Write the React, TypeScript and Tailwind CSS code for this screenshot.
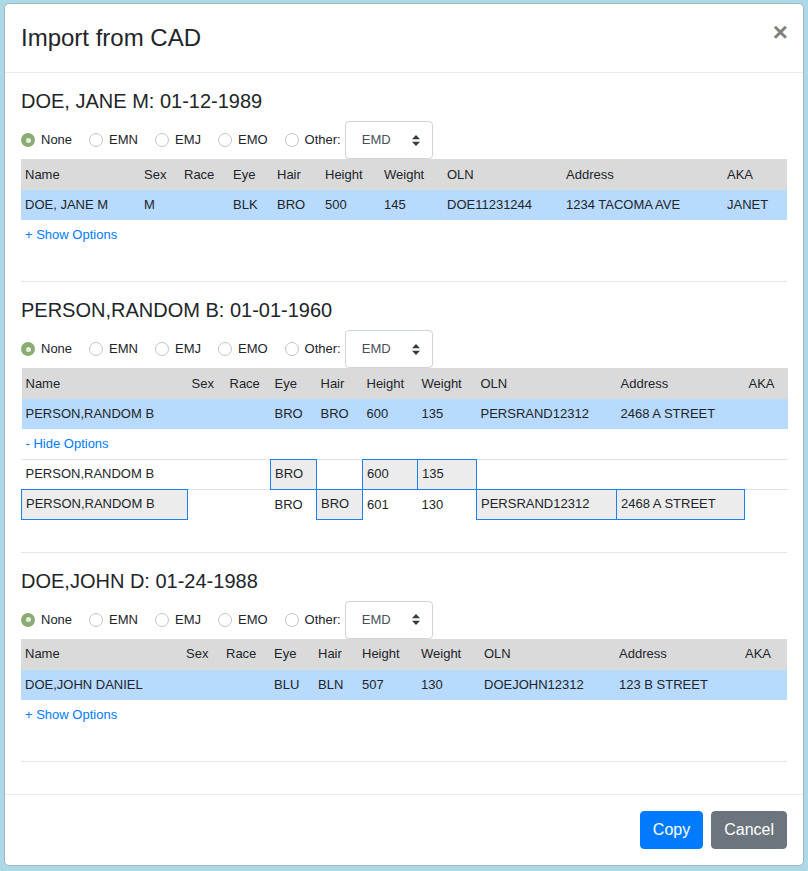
import React from 'react';

type Person = {
  name: string;
  sex: string;
  race: string;
  eye: string;
  hair: string;
  height: string;
  weight: string;
  oln: string;
  address: string;
  aka: string;
};

type OptionRow = { values: Person; marked: (keyof Person)[] };

type Section = {
  title: string;
  widths: string[];
  record: Person;
  expanded: boolean;
  options: OptionRow[];
};

const columns: { key: keyof Person; label: string }[] = [
  { key: 'name', label: 'Name' },
  { key: 'sex', label: 'Sex' },
  { key: 'race', label: 'Race' },
  { key: 'eye', label: 'Eye' },
  { key: 'hair', label: 'Hair' },
  { key: 'height', label: 'Height' },
  { key: 'weight', label: 'Weight' },
  { key: 'oln', label: 'OLN' },
  { key: 'address', label: 'Address' },
  { key: 'aka', label: 'AKA' },
];

const blank: Person = {
  name: '',
  sex: '',
  race: '',
  eye: '',
  hair: '',
  height: '',
  weight: '',
  oln: '',
  address: '',
  aka: '',
};

const sections: Section[] = [
  {
    title: 'DOE, JANE M: 01-12-1989',
    widths: ['w-[119px]', 'w-[40px]', 'w-[49px]', 'w-[44px]', 'w-[48px]', 'w-[59px]', 'w-[63px]', 'w-[119px]', 'w-[161px]', 'w-[64px]'],
    record: {
      name: 'DOE, JANE M',
      sex: 'M',
      race: '',
      eye: 'BLK',
      hair: 'BRO',
      height: '500',
      weight: '145',
      oln: 'DOE11231244',
      address: '1234 TACOMA AVE',
      aka: 'JANET',
    },
    expanded: false,
    options: [],
  },
  {
    title: 'PERSON,RANDOM B: 01-01-1960',
    widths: ['w-[166px]', 'w-[38px]', 'w-[45px]', 'w-[46px]', 'w-[46px]', 'w-[55px]', 'w-[59px]', 'w-[140px]', 'w-[128px]', 'w-[43px]'],
    record: {
      name: 'PERSON,RANDOM B',
      sex: '',
      race: '',
      eye: 'BRO',
      hair: 'BRO',
      height: '600',
      weight: '135',
      oln: 'PERSRAND12312',
      address: '2468 A STREET',
      aka: '',
    },
    expanded: true,
    options: [
      {
        values: { ...blank, name: 'PERSON,RANDOM B', eye: 'BRO', height: '600', weight: '135' },
        marked: ['eye', 'height', 'weight'],
      },
      {
        values: {
          ...blank,
          name: 'PERSON,RANDOM B',
          eye: 'BRO',
          hair: 'BRO',
          height: '601',
          weight: '130',
          oln: 'PERSRAND12312',
          address: '2468 A STREET',
        },
        marked: ['name', 'hair', 'oln', 'address'],
      },
    ],
  },
  {
    title: 'DOE,JOHN D: 01-24-1988',
    widths: ['w-[161px]', 'w-[40px]', 'w-[48px]', 'w-[44px]', 'w-[44px]', 'w-[59px]', 'w-[63px]', 'w-[135px]', 'w-[126px]', 'w-[46px]'],
    record: {
      name: 'DOE,JOHN DANIEL',
      sex: '',
      race: '',
      eye: 'BLU',
      hair: 'BLN',
      height: '507',
      weight: '130',
      oln: 'DOEJOHN12312',
      address: '123 B STREET',
      aka: '',
    },
    expanded: false,
    options: [],
  },
];

const codes = ['None', 'EMN', 'EMJ', 'EMO'];

function Radio({ checked }: { checked?: boolean }) {
  if (checked) {
    return (
      <span className="w-[14px] h-[14px] rounded-full bg-[#8aad73] flex items-center justify-center shrink-0">
        <span className="w-[5px] h-[5px] rounded-full bg-[#e8efe2]" />
      </span>
    );
  }
  return <span className="w-[14px] h-[14px] rounded-full border border-[#c4c4c4] bg-white shrink-0" />;
}

function RadioRow() {
  return (
    <div className="flex items-center h-[38px]">
      {codes.map((code, i) => (
        <label key={code} className="flex items-center mr-[17px] cursor-pointer">
          <Radio checked={i === 0} />
          <span className="ml-[6px]">{code}</span>
        </label>
      ))}
      <label className="flex items-center cursor-pointer">
        <Radio />
        <span className="ml-[6px]">Other:</span>
      </label>
      <div className="ml-[4px] w-[88px] h-[38px] border border-[#ced4da] rounded-[4px] flex items-center justify-between pl-[16px] pr-[12px] text-[#495057]">
        <span>EMD</span>
        <svg width="8" height="11" viewBox="0 0 8 11" fill="#343a40">
          <path d="M4 0L8 4.2H0z" />
          <path d="M4 11L0 6.8h8z" />
        </svg>
      </div>
    </div>
  );
}

function PersonTable({ section }: { section: Section }) {
  return (
    <table className="table-fixed w-full">
      <colgroup>
        {section.widths.map((w, i) => (
          <col key={i} className={w} />
        ))}
      </colgroup>
      <thead>
        <tr className="bg-[#dadada] h-[31px]">
          {columns.map((c) => (
            <th key={c.key} className="px-1 text-left font-normal">
              {c.label}
            </th>
          ))}
        </tr>
      </thead>
      <tbody>
        <tr className="bg-[#b8daff] h-[30px]">
          {columns.map((c) => (
            <td key={c.key} className="px-1 whitespace-nowrap">
              {section.record[c.key]}
            </td>
          ))}
        </tr>
        <tr className="h-[30px]">
          <td colSpan={10} className="px-1">
            <a href="#" className="text-[#007bff]">
              {section.expanded ? '- Hide Options' : '+ Show Options'}
            </a>
          </td>
        </tr>
        {section.options.map((row, r) => (
          <tr key={r} className="h-[30px] border-t border-[#dee2e6]">
            {columns.map((c) => (
              <td
                key={c.key}
                className={
                  row.marked.includes(c.key)
                    ? 'px-1 whitespace-nowrap bg-[#ececec] border border-[#1a7ff0]'
                    : 'px-1 whitespace-nowrap'
                }
              >
                {row.values[c.key]}
              </td>
            ))}
          </tr>
        ))}
      </tbody>
    </table>
  );
}

export default function App() {
  return (
    <div
      className="min-h-screen bg-[#add8e6] pt-[3px] pl-[4px] text-[13px] text-[#212529]"
      style={{ fontFamily: '"Liberation Sans", Arial, sans-serif' }}
    >
      <div className="w-[800px] bg-white border border-[#9fb8c0] rounded-[5px]">
        {/* Header */}
        <div className="flex items-start justify-between p-4 border-b border-[#e9ecef]">
          <h4 className="text-[24px] leading-[36px] font-normal">Import from CAD</h4>
          <button className="text-[26px] leading-none font-bold text-[#000] opacity-50 -mt-[1px] -mr-[1px]">×</button>
        </div>

        {/* Body */}
        <div className="p-4">
          {sections.map((s) => (
            <div key={s.title}>
              <h5 className="text-[20px] leading-[24px] font-normal mb-2">{s.title}</h5>
              <RadioRow />
              <PersonTable section={s} />
              <hr className={s.expanded ? 'mt-[32px] mb-4 border-t border-[#e5e5e5]' : 'mt-[31px] mb-4 border-t border-[#e5e5e5]'} />
            </div>
          ))}
        </div>

        {/* Footer */}
        <div className="flex justify-end gap-2 p-4 border-t border-[#e9ecef]">
          <button className="h-[38px] px-3 rounded-[4px] border border-[#007bff] bg-[#007bff] text-white text-[16px]">Copy</button>
          <button className="h-[38px] px-3 rounded-[4px] border border-[#6c757d] bg-[#6c757d] text-white text-[16px]">Cancel</button>
        </div>
      </div>
    </div>
  );
}
